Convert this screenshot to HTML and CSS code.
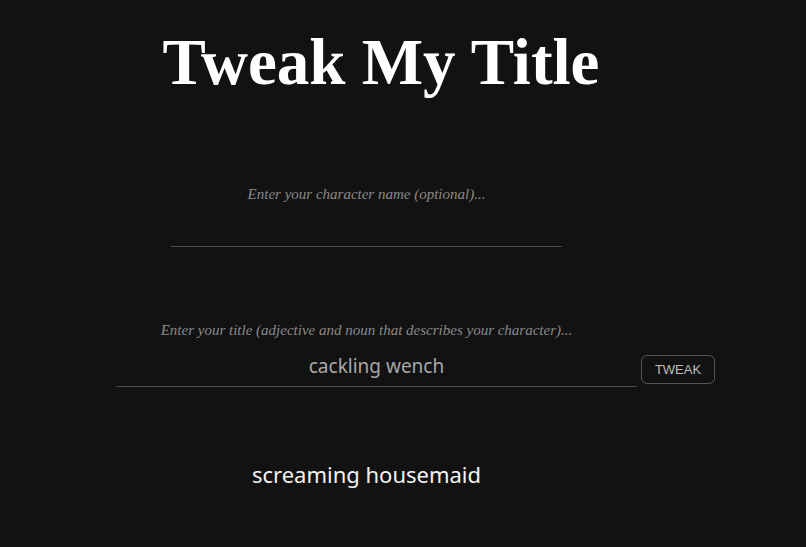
FILE: index.html
```html
<!DOCTYPE html>
<html lang="en">
<head>
  <meta charset="UTF-8" />
  <meta name="viewport" content="width=device-width, initial-scale=1.0" />
  <title>Tweak My Title</title>
  <link rel="stylesheet" href="styles.css">
</head>
<body>
  <main class="app">
    <h1 class="app-title">Tweak My Title</h1>

    <div class="name-field">
      <input type="text" class="name-input" placeholder="Enter your character name (optional)..." />
    </div>

    <div class="title-field">
      <label class="title-label" for="titleInput">Enter your title (adjective and noun that describes your character)...</label>
      <div class="title-row">
        <input type="text" id="titleInput" class="title-input" value="cackling wench" />
        <button class="tweak-button">TWEAK</button>
      </div>
    </div>

    <div class="result">screaming housemaid</div>
  </main>
</body>
</html>
```

FILE: styles.css
```css
:root {
  --bg: #121212;
  --text: #ffffff;
  --muted: #8a8a8a;
  --input-text: #a8a8a8;
  --line: #4a4a4a;
}

* {
  margin: 0;
  padding: 0;
  box-sizing: border-box;
}

body {
  background: var(--bg);
  color: var(--text);
  min-height: 100vh;
  font-family: "Liberation Serif", "Times New Roman", serif;
}

.app {
  width: 762px;
  padding-top: 22px;
}

.app-title {
  text-align: center;
  font-size: 65px;
  font-weight: bold;
  line-height: 80px;
}

.name-field {
  width: 391px;
  margin: 83px 0 0 171px;
}

.name-input,
.title-input {
  width: 100%;
  background: transparent;
  border: none;
  border-bottom: 1px solid var(--line);
  outline: none;
  text-align: center;
}

.name-input {
  font-family: "Liberation Serif", serif;
  font-size: 15px;
  line-height: 18px;
  height: 62px;
  padding: 0 0 42px;
  color: var(--input-text);
}

.name-input::placeholder {
  color: var(--muted);
  font-style: italic;
}

.title-field {
  margin: 74px 0 0 116px;
  width: 600px;
}

.title-label {
  display: block;
  width: 501px;
  text-align: center;
  font-style: italic;
  font-size: 15px;
  line-height: 18px;
  color: var(--muted);
}

.title-row {
  display: flex;
  align-items: flex-end;
  gap: 4px;
  margin-top: 10px;
}

.title-input {
  flex: 0 0 521px;
  height: 38px;
  padding-bottom: 4px;
  font-family: "Noto Sans", "Open Sans", sans-serif;
  font-size: 19px;
  color: var(--input-text);
}

.tweak-button {
  width: 74px;
  height: 29px;
  margin-bottom: 3px;
  background: transparent;
  border: 1px solid #555;
  border-radius: 6px;
  color: #bdbdbd;
  font-family: "Liberation Sans", Arial, sans-serif;
  font-size: 13px;
  cursor: pointer;
}

.result {
  width: 733px;
  margin-top: 72px;
  text-align: center;
  font-family: "Noto Sans", "Open Sans", sans-serif;
  font-size: 22px;
  line-height: 30px;
  color: #f2f2f2;
}
```
